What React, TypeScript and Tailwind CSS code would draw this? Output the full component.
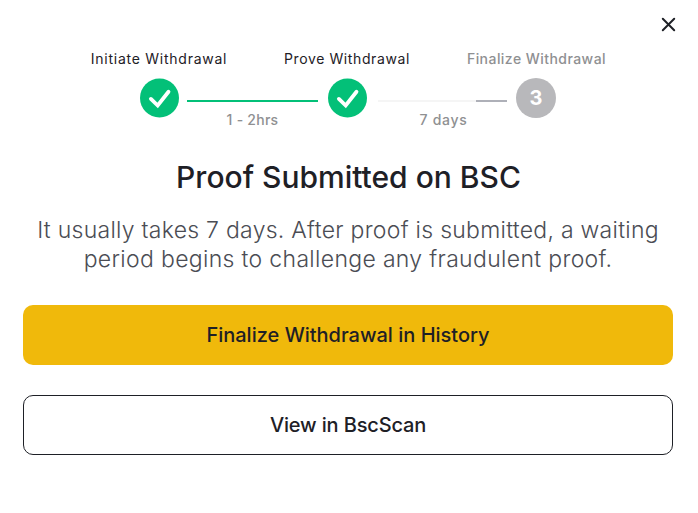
import type { ReactNode } from "react";

function CheckCircle() {
  return (
    <svg className="h-10 w-[39px] shrink-0" viewBox="0 0 39 40" fill="none">
      <circle cx="19.5" cy="20" r="19.5" fill="#03C078" />
      <path d="M10.9 20.9 17.7 27.5 28.5 13.8" stroke="#fff" strokeWidth="3.8" strokeLinecap="round" strokeLinejoin="miter" />
    </svg>
  );
}

function Connector({ className, children }: { className: string; children: ReactNode }) {
  return <div className={`flex shrink-0 flex-col items-center pt-[22px] ${className}`}>{children}</div>;
}

export default function App() {
  return (
    <main className="flex h-[513px] w-[698px] flex-col overflow-hidden bg-white font-['Inter','Liberation_Sans',sans-serif] text-[#1e2026]">
      <header className="flex h-[49px] shrink-0 justify-end pt-[17px] pr-[22px]">
        <button aria-label="Close" className="h-[15px] w-[15px]">
          <svg viewBox="0 0 15 15" className="h-[15px] w-[15px]" fill="none" stroke="#1e2026" strokeWidth="2" strokeLinecap="round">
            <path d="M1.8 1.8 13.2 13.2M13.2 1.8 1.8 13.2" />
          </svg>
        </button>
      </header>

      <section className="h-[111px] shrink-0">
        <div className="flex h-[29px] pl-[64px] text-[14px] leading-5 whitespace-nowrap">
          <div className="flex w-[189px] justify-center pl-px"><span className="tracking-[0.75px]">Initiate Withdrawal</span></div>
          <div className="flex w-[188px] justify-center"><span className="tracking-[0.6px]">Prove Withdrawal</span></div>
          <div className="flex w-[190px] justify-center pl-px font-medium text-[#8f9092]"><span className="tracking-[0.45px]">Finalize Withdrawal</span></div>
        </div>
        <div className="flex pl-[140px]">
          <CheckCircle />
          <Connector className="mr-[10px] ml-2 w-[131px]">
            <div className="h-[2px] w-full shrink-0 bg-[#03c078]" />
            <span className="mt-[8px] text-[14px] leading-5 font-medium tracking-[0.25px] whitespace-nowrap text-[#8f9092]">1 - 2hrs</span>
          </Connector>
          <CheckCircle />
          <Connector className="mr-[9px] ml-[11px] w-[129px]">
            <div className="flex h-[2px] w-full shrink-0 justify-end bg-[#f5f5f5]">
              <div className="h-[2px] w-[31px] bg-[#aeb0b8]" />
            </div>
            <span className="mt-[8px] pl-[2px] text-[14px] leading-5 font-medium tracking-[0.7px] whitespace-nowrap text-[#8f9092]">7 days</span>
          </Connector>
          <div className="flex h-10 w-10 shrink-0 items-center justify-center rounded-full bg-[#b8b8bb] text-[20px] leading-6 font-bold text-white">3</div>
        </div>
      </section>

      <h1 className="h-[56px] shrink-0 pr-[1px] text-center text-[30px] leading-[34px] font-medium whitespace-nowrap">Proof Submitted on BSC</h1>

      <p className="h-[89px] shrink-0 pr-[2px] text-center text-[23px] leading-[29px] font-light whitespace-nowrap text-[#4b4d54]">
        <span className="tracking-[0.27px]">It usually takes 7 days. After proof is submitted, a waiting</span>
        <br />
        <span className="tracking-[0.33px]">period begins to challenge any fraudulent proof.</span>
      </p>

      <div className="flex flex-col gap-[30px] pr-[25px] pl-[23px] text-[20px] font-medium">
        <button className="h-[60px] rounded-[10px] bg-[#f0b90b]"><span>Finalize Withdrawal in History</span></button>
        <button className="h-[60px] rounded-[10px] border border-[#1e2026]"><span className="tracking-[-0.15px]">View in BscScan</span></button>
      </div>
    </main>
  );
}
